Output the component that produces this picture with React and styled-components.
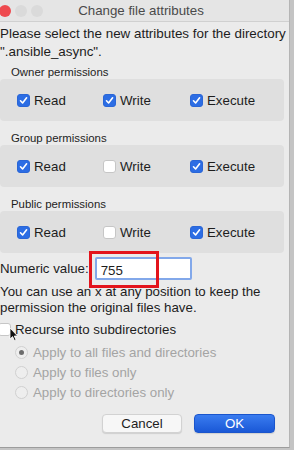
import styled, { createGlobalStyle } from 'styled-components'

const GlobalStyle = createGlobalStyle`
  body {
    margin: 0;
    background: #c4c4c4;
    font-family: 'Liberation Sans', Arial, sans-serif;
  }
`

const Window = styled.div`
  position: relative;
  width: 289px;
  height: 447px;
  background: #ebebeb;
  border-right: 1px solid #b4b4b4;
  border-bottom: 1px solid #9c9c9c;
  overflow: hidden;
  color: #1d1d1d;
`

const TitleBar = styled.div`
  display: grid;
  grid-template-columns: 1fr auto 1fr;
  align-items: center;
  height: 22px;
  padding-right: 7px;
  background: #e5e5e5;
  border-bottom: 1px solid #d0d0d0;
  box-sizing: border-box;
`

const Lights = styled.div`
  display: flex;
  gap: 4px;
  margin-left: -1px;
`

const Light = styled.span`
  width: 12px;
  height: 12px;
  border-radius: 50%;
  background: ${({ color }) => color};
`

const Title = styled.div`
  font-size: 13.3px;
  color: #4a4a4a;
`

const Content = styled.div`
  padding: 3px 5px 0 0;
`

const Intro = styled.p`
  margin: 0;
  font-size: 13.4px;
  line-height: 18px;
  white-space: nowrap;
`

const SectionLabel = styled.div`
  margin-top: ${({ top }) => top}px;
  padding-left: 11px;
  font-size: 11.4px;
  line-height: 14px;
`

const GroupBox = styled.div`
  display: grid;
  grid-template-columns: 86px 87px 1fr;
  align-items: center;
  height: 42px;
  padding-left: 17px;
  background: #dfdfdf;
  border-radius: 4px;
`

const Option = styled.label`
  display: flex;
  align-items: center;
  gap: 4px;
  font-size: 13.3px;
`

const Box = styled.span`
  display: flex;
  align-items: center;
  justify-content: center;
  width: 13px;
  height: 13px;
  border-radius: 3px;
  box-sizing: border-box;
  background: ${({ checked }) => (checked ? '#2c6de4' : '#ffffff')};
  border: 1px solid ${({ checked }) => (checked ? '#2a66d6' : '#c6c6c6')};
`

const NumericRow = styled.div`
  display: flex;
  align-items: center;
  gap: 6px;
  margin-top: 4px;
  font-size: 13.3px;
`

const InputWrap = styled.div`
  position: relative;
`

const Input = styled.div`
  width: 97px;
  height: 23px;
  box-sizing: border-box;
  padding: 4px 0 0 4px;
  background: #fff;
  border: 2px solid #82a8ea;
  border-radius: 2px;
  font-size: 13.3px;
`

const Highlight = styled.div`
  position: absolute;
  left: -6px;
  top: -6px;
  width: 70px;
  height: 37px;
  box-sizing: border-box;
  border: 3px solid #e3141c;
`

const Help = styled.p`
  margin: 4px 0 0;
  font-size: 13.3px;
  line-height: 16px;
  white-space: nowrap;
`

const Recurse = styled(Option)`
  height: 16px;
  margin: 5px 0 0 -2px;
`

const Radios = styled.div`
  display: flex;
  flex-direction: column;
  margin-top: 5px;
  padding-left: 15px;
`

const RadioRow = styled.div`
  display: flex;
  align-items: center;
  gap: 5px;
  height: 20px;
  font-size: 13.3px;
  color: #a4a4a4;
`

const Radio = styled.span`
  display: flex;
  align-items: center;
  justify-content: center;
  width: 13px;
  height: 13px;
  border-radius: 50%;
  box-sizing: border-box;
  background: #eeeeee;
  border: 1px solid #d0d0d0;

  &::after {
    content: '';
    width: 5px;
    height: 5px;
    border-radius: 50%;
    background: ${({ checked }) => (checked ? '#6c6c6c' : 'transparent')};
  }
`

const Buttons = styled.div`
  display: flex;
  justify-content: flex-end;
  gap: 12px;
  margin-top: 12px;
  padding-right: 9px;
`

const Button = styled.button`
  width: ${({ primary }) => (primary ? 81 : 80)}px;
  height: 19px;
  padding: 0;
  border-radius: 4px;
  font-family: inherit;
  font-size: 13.3px;
  border: ${({ primary }) => (primary ? '1px solid #1a55cc' : '1px solid #d2d2d2')};
  color: ${({ primary }) => (primary ? '#ffffff' : '#1d1d1d')};
  background: ${({ primary }) =>
    primary ? 'linear-gradient(#3a7cf0, #1a58d6)' : '#f7f7f7'};
  box-shadow: 0 1px 1px rgba(0, 0, 0, 0.12);
`

const Cursor = styled.svg`
  position: absolute;
  left: 9px;
  top: 327px;
`

const Check = () => (
  <svg width="9" height="9" viewBox="0 0 9 9">
    <path d="M1.5 4.8 L3.6 7 L7.6 1.8" fill="none" stroke="#fff" strokeWidth="1.6" strokeLinecap="round" strokeLinejoin="round" />
  </svg>
)

const Checkbox = ({ checked, children }) => (
  <Option>
    <Box checked={checked}>{checked && <Check />}</Box>
    {children}
  </Option>
)

const groups = [
  { name: 'Owner permissions', top: 4, values: [true, true, true] },
  { name: 'Group permissions', top: 10, values: [true, false, true] },
  { name: 'Public permissions', top: 10, values: [true, false, true] },
]

const labels = ['Read', 'Write', 'Execute']

const App = () => (
  <>
    <GlobalStyle />
    <Window>
      <TitleBar>
        <Lights>
          <Light color="#ee4a4f" />
          <Light color="#dadada" />
          <Light color="#dadada" />
        </Lights>
        <Title>Change file attributes</Title>
        <span />
      </TitleBar>

      <Content>
        <Intro>
          Please select the new attributes for the directory
          <br />
          ".ansible_async".
        </Intro>

        {groups.map((g) => (
          <div key={g.name}>
            <SectionLabel top={g.top}>{g.name}</SectionLabel>
            <GroupBox>
              {labels.map((l, i) => (
                <Checkbox key={l} checked={g.values[i]}>
                  {l}
                </Checkbox>
              ))}
            </GroupBox>
          </div>
        ))}

        <NumericRow>
          Numeric value:
          <InputWrap>
            <Input>755</Input>
            <Highlight />
          </InputWrap>
        </NumericRow>

        <Help>
          You can use an x at any position to keep the
          <br />
          permission the original files have.
        </Help>

        <Recurse>
          <Box />
          Recurse into subdirectories
        </Recurse>

        <Radios>
          <RadioRow>
            <Radio checked />
            Apply to all files and directories
          </RadioRow>
          <RadioRow>
            <Radio />
            Apply to files only
          </RadioRow>
          <RadioRow>
            <Radio />
            Apply to directories only
          </RadioRow>
        </Radios>

        <Buttons>
          <Button>Cancel</Button>
          <Button primary>OK</Button>
        </Buttons>
      </Content>

      <Cursor width="10" height="15" viewBox="0 0 10 15">
        <path d="M1 1 L1 12 L3.6 9.6 L5.4 13.6 L7 12.9 L5.3 9 L8.6 9 Z" fill="#111" stroke="#fff" strokeWidth="0.8" />
      </Cursor>
    </Window>
  </>
)

export default App
